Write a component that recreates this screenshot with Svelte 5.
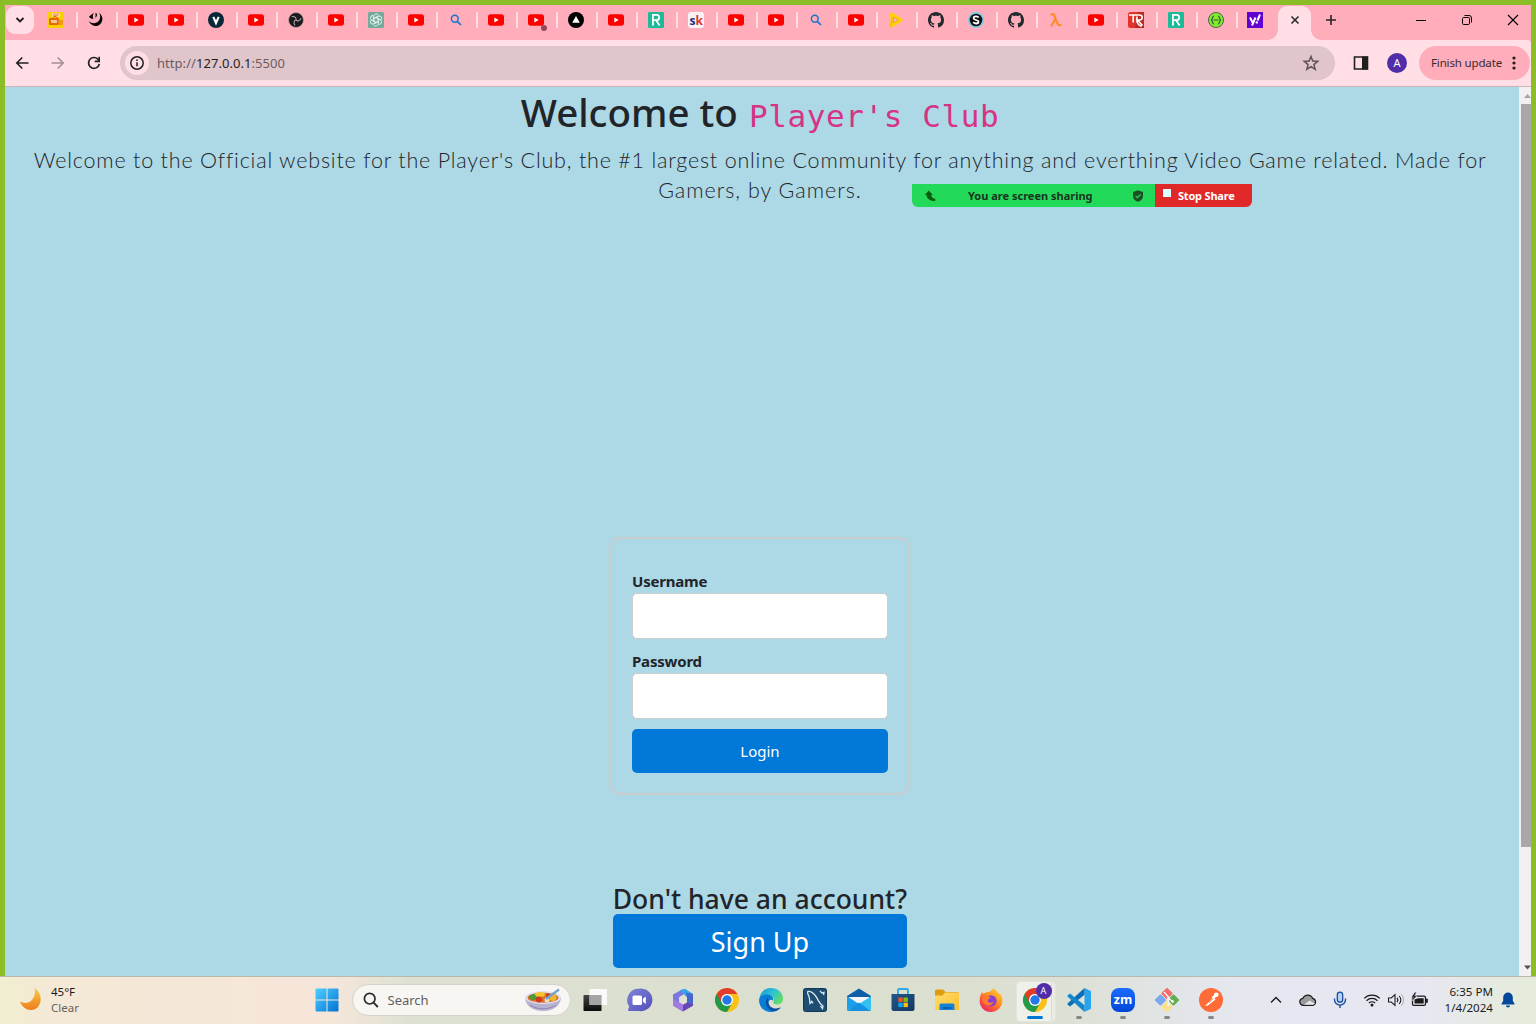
<script>
  const tabs = [
    'shop', 'swirl', 'yt', 'yt', 'v', 'yt', 'obs', 'yt', 'gpt', 'yt', 'search', 'yt', 'ytdot', 'tri', 'yt', 'r',
    'sk', 'yt', 'yt', 'search', 'yt', 'play', 'gh', 's', 'gh', 'lambda', 'yt', 'tr', 'r', 'swagger', 'yahoo'
  ];
  const apps = [
    { id: 'taskview' }, { id: 'chat' }, { id: 'm365' }, { id: 'chrome' }, { id: 'edge' }, { id: 'mysql' },
    { id: 'mail' }, { id: 'store' }, { id: 'files' }, { id: 'firefox' }, { id: 'chrome', active: true },
    { id: 'vscode', open: true }, { id: 'zoom', open: true }, { id: 'git', open: true }, { id: 'postman', open: true }
  ];
</script>

{#snippet favicon(kind)}
  <svg class="fav" viewBox="0 0 16 16">
    {#if kind === 'yt' || kind === 'ytdot'}
      <rect x="0" y="2.2" width="16" height="11.6" rx="2.8" fill="#f00" />
      <path d="M6.3 5.5v5l4.4-2.5z" fill="#fff" />
    {:else if kind === 'shop'}
      <rect width="16" height="16" fill="#f9cf00" />
      <rect x="4" y="1" width="8" height="4" rx="1" fill="#f6e3a0" />
      <path d="M5 2.2h6M5 3.8h5" stroke="#e86a4a" stroke-width=".8" />
      <rect x="1" y="6" width="10" height="7" rx="1" fill="#e8650c" />
      <rect x="3" y="8" width="6" height="3" fill="#f8c890" />
      <rect x="10.500" y="8" width="4.500" height="5" fill="#f09a1a" />
      <path d="M5 6l1-1.500h2L9 6" stroke="#e8650c" fill="none" />
    {:else if kind === 'swirl'}
      <path d="M1 4.500 6 .8C4.300 3.300 4.500 5.500 5.500 6.500 3.800 7.200 2 6.500 1 4.500z" fill="#000" />
      <path d="M7 1.200C8 2 7.600 4 7.200 5.800 8.800 5 9.300 3.500 8.800 1.500z" fill="#000" />
      <path d="M11 .8c2 3.300 1.500 7-1.300 9.200-2.500 1.800-6.200 1.500-9-.8C3 13.200 6.800 15 10.200 13.500 15.300 11.200 16 4.300 11 .8z" fill="#000" />
    {:else if kind === 'v'}
      <circle cx="8" cy="8" r="8" fill="#08283a" />
      <path d="M5.300 4.800 8 11l2.700-6.200" stroke="#fff" stroke-width="2.100" fill="none" />
    {:else if kind === 'obs'}
      <circle cx="8" cy="8" r="7.500" fill="#1b1a1c" stroke="#c9a2a9" stroke-width=".8" />
      <g fill="none" stroke="#aaa5a7" stroke-width="1.100">
        {#each [0, 120, 240] as a}
          <path transform="rotate({a} 8 8)" d="M8 8C8.500 6 7 4 3.800 4.600" />
        {/each}
      </g>
    {:else if kind === 'gpt'}
      <rect width="16" height="16" rx="1.500" fill="#75a99b" />
      <g fill="none" stroke="#e8f2ef" stroke-width=".9">
        {#each [0, 60, 120, 180, 240, 300] as a}
          <path transform="rotate({a} 8 8)" d="M5.800 9.200V4.300a2.500 2.500 0 0 1 4.600-1.200M5.800 6.700 10 4.300" />
        {/each}
      </g>
    {:else if kind === 'search'}
      <circle cx="6.800" cy="6.700" r="3.400" fill="none" stroke="#1a73c9" stroke-width="1.500" />
      <path d="m9.300 9.300 3.700 3.700" stroke="#1a73c9" stroke-width="1.700" />
    {:else if kind === 'tri'}
      <circle cx="8" cy="8" r="8" fill="#000" />
      <path d="M8 4 11.800 10.800H4.200z" fill="#fff" />
    {:else if kind === 'r'}
      <rect width="16" height="16" rx="1.200" fill="#1dba9a" />
      <path d="M4.900 13.500V2.800h3.800c3.300 0 3.300 5.400 0 5.400H4.900M8 8.200l3.600 5.300" stroke="#fff" stroke-width="1.800" fill="none" />
    {:else if kind === 'sk'}
      <rect width="16" height="16" rx="3" fill="#f7f2f5" />
      <text x="1.600" y="12.500" class="g" fill="#252f85">s</text>
      <text x="7.400" y="12.500" class="g" fill="#e0342c">k</text>
    {:else if kind === 'play'}
      <path d="M1.500 1.500 5 .8 15 7.500 13 10 4 15.500 2 14.500l.5-8z" fill="#ffcf0a" />
      <path d="M5.500 5v6l5-3.200z" fill="#ffb0bc" stroke="#e9a800" stroke-width=".8" />
      <path d="M2.500 14 4.500 5.500" stroke="#f1b400" />
    {:else if kind === 'gh'}
      <path fill="#24292f" d="M8 0C3.580 0 0 3.580 0 8c0 3.540 2.290 6.530 5.470 7.590.4.070.55-.17.55-.38 0-.19-.01-.82-.01-1.490-2.010.37-2.530-.49-2.690-.94-.09-.23-.48-.94-.82-1.130-.28-.15-.68-.52-.01-.53.63-.01 1.080.58 1.230.82.72 1.210 1.870.87 2.330.66.07-.52.28-.87.51-1.070-1.780-.2-3.640-.89-3.640-3.950 0-.87.31-1.590.82-2.150-.08-.2-.36-1.020.08-2.120 0 0 .67-.21 2.200.82.64-.18 1.320-.27 2-.27s1.360.09 2 .27c1.530-1.040 2.200-.82 2.200-.82.44 1.100.16 1.920.08 2.120.51.56.82 1.270.82 2.150 0 3.070-1.870 3.750-3.650 3.950.29.25.54.73.54 1.480 0 1.070-.01 1.930-.01 2.200 0 .21.15.46.55.38A8.010 8.010 0 0 0 16 8c0-4.420-3.580-8-8-8z" />
    {:else if kind === 's'}
      <circle cx="8" cy="8" r="8" fill="#7fc9e8" />
      <circle cx="8" cy="8" r="6.300" fill="#111" />
      <path d="M10.600 5.600C9.800 4 5.600 4 5.600 6.200c0 2.300 4.900 1.300 4.900 3.600 0 2.200-4.300 2.200-5.200.4" stroke="#fff" stroke-width="1.800" fill="none" />
    {:else if kind === 'lambda'}
      <path d="M2.500 2.300h3.300c1.500 3.800 2.700 8 4.500 10.300.8 1 1.800.8 3.200.2M7.500 7 3 14.300" stroke="#ff8b2e" stroke-width="2.200" fill="none" />
    {:else if kind === 'tr'}
      <rect width="16" height="16" rx="2.500" fill="#e0352b" />
      <path d="M10 0h6v16H7z" fill="#b92a22" />
      <path d="M1 3h10.500c3.500 0 3.500 5 0 5H9.500l5 5.500M5.200 3v7.500M9.300 4.500C8 8 8.500 12.500 13.500 14.500" stroke="#fff" stroke-width="1.600" fill="none" />
    {:else if kind === 'swagger'}
      <circle cx="8" cy="8" r="7.500" fill="#85ea2d" stroke="#3b6a4e" stroke-width="1" />
      <path d="M6 4c-2 0-1 3-2.500 4C5 9 4 12 6 12M10 4c2 0 1 3 2.500 4C11 9 12 12 10 12M5.500 8h5" stroke="#2c5a36" stroke-width="1.200" fill="none" />
    {:else if kind === 'yahoo'}
      <rect width="16" height="16" fill="#6001d2" />
      <path d="m3 5.500 2.600 5M8.500 5.500 5 13.500" stroke="#fff" stroke-width="1.900" fill="none" />
      <path d="m13 2.500-2.500 6" stroke="#fff" stroke-width="2" />
      <circle cx="9.800" cy="10.400" r="1.200" fill="#fff" />
    {/if}
  </svg>
{/snippet}

{#snippet app(id)}
  <svg class="app-icon" viewBox="0 0 24 24">
    {#if id === 'taskview'}
      <rect x=".5" y="7" width="18" height="16" rx=".8" fill="url(#dark)" />
      <rect x="6.500" y="1" width="17.500" height="16" rx=".8" fill="#fff" opacity=".85" />
      <rect x="6.500" y="7" width="12" height="10" fill="#a5a5a5" />
    {:else if id === 'chat'}
      <path d="M12 .8A11.300 11.300 0 1 1 12 23H1.800c-.7 0-1-.6-.7-1.200l1.200-3.200A11.300 11.300 0 0 1 12 .8z" fill="url(#violet)" />
      <rect x="5.500" y="7.500" width="9.500" height="9.500" rx="1.600" fill="#fff" />
      <path d="m16 10.800 2.800-2.300v7.500L16 13.800z" fill="#fff" />
    {:else if id === 'm365'}
      <path d="M12 1 2 6.500v11l6-3V9.300l6.500-4.300z" fill="#7a78e0" />
      <path d="M9 2.500 14 .8l8 5.200v6l-6-2.700z" fill="#35a4ea" />
      <path d="m15 4.500 7 1.500v12l-6-3.300V9.300z" fill="#4668cc" />
      <path d="M22 16.500v1.300L12 23.500l-10-6 6-3 4 2.200 4-2.300z" fill="#6845b4" />
      <path d="M2 11v6.500l10 6v-6.700l-4-2.300z" fill="#a07be0" />
      <path d="m12 8 3.500 2v4L12 16l-3.500-2v-4z" fill="#dfe1d6" />
    {:else if id === 'chrome'}
      <circle cx="12" cy="12" r="12" fill="#fbc116" />
      <path d="M1.600 6A12 12 0 0 0 12 24l5.200-9L12 12z" fill="#229a48" />
      <path d="M1.600 6A12 12 0 0 1 22.400 6H12A6 6 0 0 0 6.500 14.500z" fill="#e33b2e" />
      <circle cx="12" cy="12" r="6" fill="#fff" />
      <circle cx="12" cy="12" r="4.700" fill="#2477e8" />
    {:else if id === 'edge'}
      <path d="M.4 10.500C1.200 4 6 0 12 0c7 0 12 5 12 10.500 0 4-3 6-6 6-2.500 0-4.300-.9-3.500-2.400 1.900-3.600-1.500-6-4.500-6C5 8.100.4 11 .4 10.500z" fill="url(#edgeTop)" />
      <path d="M0 12C.5 8.500 4.500 6 8.500 6.500c4 .4 6.500 3.500 5.700 6.500C12 10 8.500 13 9 16.500c.6 4 5.500 6.500 12.500 2.700C19 22.500 15.500 24 12 24 5 24 0 19 0 12z" fill="#087bd4" />
      <path d="M9 9.500C5.500 12 6.500 20 12.500 22.500c4 1.500 7-.3 9.200-3C17 22 9.500 20 9.500 14z" fill="#0c4fa0" />
    {:else if id === 'mysql'}
      <rect x=".5" y=".5" width="23" height="23" rx="2" fill="#1d4d73" stroke="#123754" />
      <path d="M4.500 3.500c3-.5 6 1.500 8.500 5s2.500 6.500 7 9.500l-.5 2.500-2-2.500M4.500 3.500c0 3.500 2 4.500 2 7.500l.5 4.500 1.800-2.200 1.200 2M17 3l2 2 2-.5-.5 2.500" stroke="#d9e6ee" stroke-width="1.300" fill="none" />
    {:else if id === 'mail'}
      <path d="M0 8 12 .5 24 8v4H0z" fill="#0f5fa8" />
      <path d="M2 9h20v7H2z" fill="#f4f6f8" />
      <path d="M0 8.300 12 16 0 22.500z" fill="#1aa0ea" />
      <path d="M24 8.300 12 16l12 6.500z" fill="#35c0f4" />
      <path d="M0 23 12 14.500 24 23z" fill="#1492e0" />
    {:else if id === 'store'}
      <path d="M7 6V2.200C7 1.500 7.500 1 8.200 1h7.600c.7 0 1.200.5 1.200 1.200V6" stroke="#2ea8e6" stroke-width="1.800" fill="none" />
      <path d="M.5 6h23v15a2 2 0 0 1-2 2h-19a2 2 0 0 1-2-2z" fill="url(#navy)" />
      <rect x="7.300" y="9.500" width="4.400" height="4.400" fill="#f35325" /><rect x="12.500" y="9.500" width="4.400" height="4.400" fill="#81bc06" />
      <rect x="7.300" y="14.700" width="4.400" height="4.400" fill="#05a6f0" /><rect x="12.500" y="14.700" width="4.400" height="4.400" fill="#ffba08" />
    {:else if id === 'files'}
      <path d="M0 3a1.500 1.500 0 0 1 1.500-1.500H8L10.500 4H22a2 2 0 0 1 2 2v5H0z" fill="#dd9c10" />
      <path d="M0 7.500h7.500L10 4.500h14V22H0z" fill="url(#folder)" />
      <path d="M4.500 22v-5a1.500 1.500 0 0 1 1.500-1.500h12a1.500 1.500 0 0 1 1.500 1.500v5z" fill="#1681d8" />
      <rect x="7.500" y="19" width="9" height="2" rx="1" fill="#0c5fae" />
    {:else if id === 'firefox'}
      <path d="M3 4 4.500 6C6 4.500 8 4 10 4l5-3.800C16.500 3 19.500 3.500 20 6l1-.8C23.800 9 24.200 13 22.500 17a11.500 11.500 0 0 1-21.300-.5C-.2 11 1.500 7 3 4z" fill="url(#fire)" />
      <circle cx="12" cy="12.800" r="5.600" fill="#8a3fd0" />
      <path d="M3.500 9.500c3.500-2.500 6.500-1.500 8-.2-.5 1.800-2.500 1.700-2.800 2.700-.3 3 3.300 3.700 6 1.500-1 3.500-4.500 5-7.500 3.500s-4.500-4-3.700-7.500z" fill="#ff7c2a" />
    {:else if id === 'vscode'}
      <path d="M17.500 0 24 3.200v17.600L17.500 24z" fill="#26a5ed" />
      <path d="M17.500 0v6.700L3 18.500l-2.500-2v-1z" fill="#0a6fb8" />
      <path d="M17.500 24v-6.700L3 5.500l-2.500 2v1z" fill="#1386cf" />
    {:else if id === 'zoom'}
      <rect width="24" height="24" rx="8" fill="url(#zoomBlue)" />
      <text x="12" y="16" class="zm" text-anchor="middle">zm</text>
    {:else if id === 'git'}
      <g transform="translate(12 12) rotate(45) scale(.98) translate(-12 -12)">
        <rect x="3" y="3" width="8.600" height="8.600" rx="1" fill="#f26d6d" />
        <rect x="12.400" y="3" width="8.600" height="8.600" rx="1" fill="#63ad54" />
        <rect x="3" y="12.400" width="8.600" height="8.600" rx="1" fill="#7aa8ee" />
        <rect x="12.400" y="12.400" width="8.600" height="8.600" rx="1" fill="#fbe08a" />
      </g>
      <path d="m9 4 4.500 5v8M13.500 10l4 3.500" stroke="#f2f2ee" stroke-width="1.400" fill="none" />
      <circle cx="13.500" cy="10" r="1.500" fill="#f2f2ee" /><circle cx="13.500" cy="17" r="1.400" fill="#f2f2ee" /><circle cx="17.500" cy="13.500" r="1.400" fill="#f2f2ee" />
    {:else if id === 'postman'}
      <circle cx="12" cy="12" r="12" fill="#ff6c37" />
      <path d="m6 18 8.500-8.500 2 2L9 17.500z" fill="#fff" />
      <path d="m13.500 10.500 3-3" stroke="#fff" stroke-width="2.600" />
      <circle cx="17.300" cy="6.700" r="2.300" fill="#fff" />
      <path d="M5 18.500h4M10 15l4.500-4.500" stroke="#ff6c37" stroke-width=".7" />
    {/if}
  </svg>
{/snippet}

<svg class="defs" width="0" height="0">
  <defs>
    <linearGradient id="dark" x2="0" y2="1"><stop stop-color="#444" /><stop offset="1" stop-color="#0b0b0b" /></linearGradient>
    <linearGradient id="violet" x2="1" y2="1"><stop stop-color="#7f82dc" /><stop offset="1" stop-color="#5350b4" /></linearGradient>
    <linearGradient id="edgeTop" x2="1" y2=".6"><stop stop-color="#1594d8" /><stop offset=".55" stop-color="#2fc3d3" /><stop offset="1" stop-color="#62dc66" /></linearGradient>
    <linearGradient id="navy" x2="1" y2="1"><stop stop-color="#20598c" /><stop offset="1" stop-color="#16365f" /></linearGradient>
    <linearGradient id="folder" x2="1" y2="1"><stop stop-color="#ffdc70" /><stop offset="1" stop-color="#fcc02c" /></linearGradient>
    <linearGradient id="fire" x1="1" x2=".2" y2="1"><stop stop-color="#ffe13c" /><stop offset=".5" stop-color="#ff8a1f" /><stop offset="1" stop-color="#ee1e62" /></linearGradient>
    <linearGradient id="zoomBlue" x2="0" y2="1"><stop stop-color="#1a6dff" /><stop offset="1" stop-color="#0045d8" /></linearGradient>
    <linearGradient id="win" x2="1" y2="1"><stop stop-color="#4fd0ff" /><stop offset="1" stop-color="#0272d2" /></linearGradient>
    <linearGradient id="moonFill" x2="0" y2="1"><stop stop-color="#f8cb45" /><stop offset="1" stop-color="#ee7d1c" /></linearGradient>
  </defs>
</svg>

<div class="screen">
  <div class="browser">
    <div class="tabstrip">
      <div class="tabsearch"><svg width="10" height="8" viewBox="0 0 10 8"><path d="m1.500 2 3.500 3.500L8.500 2" stroke="#1f1f1f" stroke-width="1.900" fill="none" /></svg></div>
      <div class="tabs">
        {#each tabs as t}
          <div class="tab">{@render favicon(t)}{#if t === 'ytdot'}<i class="dot"></i>{/if}</div>
        {/each}
      </div>
      <div class="active-tab"><svg width="10" height="10" viewBox="0 0 10 10"><path d="m1.500 1.500 7 7m0-7-7 7" stroke="#2b2b2b" stroke-width="1.600" /></svg></div>
      <svg class="plus" width="12" height="12" viewBox="0 0 12 12"><path d="M6 1v10M1 6h10" stroke="#2b2326" stroke-width="1.600" /></svg>
      <div class="winbtns">
        <svg width="12" height="12" viewBox="0 0 12 12"><path d="M1 6.500h10" stroke="#000" /></svg>
        <svg width="12" height="12" viewBox="0 0 12 12"><rect x="1.500" y="3.500" width="7" height="7" rx="1.200" fill="none" stroke="#000" /><path d="M3.500 1.500H8A2.500 2.500 0 0 1 10.500 4v4.500" fill="none" stroke="#000" /></svg>
        <svg width="12" height="12" viewBox="0 0 12 12"><path d="m1 1 10 10M11 1 1 11" stroke="#000" stroke-width="1.100" /></svg>
      </div>
    </div>

    <div class="toolbar">
      <div class="nav">
        <svg width="14" height="14" viewBox="0 0 14 14"><path d="M13.500 7H2M7.300 1.500 1.800 7l5.500 5.500" stroke="#1f1f1f" stroke-width="1.600" fill="none" /></svg>
        <svg width="14" height="14" viewBox="0 0 14 14"><path d="M.5 7H12M6.700 1.500 12.200 7l-5.500 5.500" stroke="#a38d93" stroke-width="1.600" fill="none" /></svg>
        <svg width="14" height="14" viewBox="0 0 14 14"><path d="M12.300 7.800A5.400 5.400 0 1 1 10.900 3.200L12.500 5" stroke="#1f1f1f" stroke-width="1.700" fill="none" /><path d="M13 .8v5.400H7.700v-1.600h3.700V.8z" fill="#1f1f1f" /></svg>
      </div>
      <div class="address">
        <div class="info"><svg width="14" height="14" viewBox="0 0 14 14"><circle cx="7" cy="7" r="6.200" fill="none" stroke="#1f1f1f" stroke-width="1.500" /><path d="M7 6.200v4M7 3.500v1.500" stroke="#1f1f1f" stroke-width="1.500" /></svg></div>
        <span class="url">http://<b>127.0.0.1</b>:5500</span>
        <svg class="star" width="16" height="16" viewBox="0 0 16 16"><path d="m8 1.500 1.800 4.600 4.900.3-3.800 3.200 1.300 4.800L8 11.700l-4.200 2.700 1.300-4.800L1.300 6.400l4.900-.3z" stroke="#5d5356" stroke-width="1.500" fill="none" /></svg>
      </div>
      <svg class="panel" width="16" height="16" viewBox="0 0 16 16"><path d="M1.500 2h13v12h-13z" fill="none" stroke="#1f1f1f" stroke-width="1.600" /><path d="M9 1.500h6v13H9z" fill="#1f1f1f" /></svg>
      <div class="avatar">A</div>
      <div class="update"><span>Finish update</span><svg width="4" height="14" viewBox="0 0 4 14"><circle cx="2" cy="2" r="1.600" /><circle cx="2" cy="7" r="1.600" /><circle cx="2" cy="12" r="1.600" /></svg></div>
    </div>

    <div class="viewport">
      <main class="page">
        <h1><span>Welcome to</span> <code>Player's Club</code></h1>
        <p class="intro">Welcome to the Official website for the Player's Club, the #1 largest online Community for anything and everthing Video Game related. Made for<br /><span class="tail">Gamers, by Gamers.</span></p>
        <form class="login">
          <label for="user">Username</label>
          <input id="user" type="text" />
          <label for="pass">Password</label>
          <input id="pass" type="password" />
          <button type="button">Login</button>
        </form>
        <section class="signup">
          <h3>Don't have an account?</h3>
          <button type="button">Sign Up</button>
        </section>
      </main>
      <div class="scrollbar">
        <svg width="12" height="17" viewBox="0 0 12 17"><path d="m5 11 3.500-4 3.500 4z" fill="#a3a3a3" /></svg>
        <div class="thumb"></div>
        <svg class="down" width="12" height="17" viewBox="0 0 12 17"><path d="m5 6.500 3.500 4 3.500-4z" fill="#505050" /></svg>
      </div>
    </div>
  </div>

  <div class="sharing">
    <div class="green">
      <svg width="12" height="12" viewBox="0 0 12 12"><path d="M.8 5 4.700.6 8.800 5H7.300c0 2.200 1.500 3.500 3.900 3.800V11C6.500 11 2.700 9 2.500 5z" fill="#0b5d0e" /></svg>
      <span>You are screen sharing</span>
      <svg width="12" height="12" viewBox="0 0 12 12"><path d="M6 .3 11 2v4c0 3-2.300 4.800-5 5.800C3.300 10.800 1 9 1 6V2z" fill="#1c4f22" /><path d="m3.600 5.800 1.800 1.800 3.200-3.200" stroke="#23d959" stroke-width="1.200" fill="none" /></svg>
    </div>
    <div class="red"><i></i><span>Stop Share</span></div>
  </div>

  <footer class="taskbar">
    <div class="weather">
      <svg width="24" height="24" viewBox="0 0 24 24"><path d="M15.500 1C26 8.500 22 22.500 12.500 23 7.500 23.200 3 20 1 14.500c4.500 2.500 9.500 1.500 12.300-2C16 9 16.500 5 15.500 1z" fill="url(#moonFill)" /></svg>
      <div><div class="temp">45°F</div><div class="cond">Clear</div></div>
    </div>
    <div class="center">
      <div class="cell"><svg width="24" height="24" viewBox="0 0 24 24"><path d="M.5 1.500A1 1 0 0 1 1.500.5h10v11H.5zM12.500.5h10a1 1 0 0 1 1 1v10h-11zM.5 12.500h11v11h-10a1 1 0 0 1-1-1zM12.500 12.500h11v10a1 1 0 0 1-1 1h-10z" fill="url(#win)" /></svg></div>
      <div class="searchbox">
        <svg width="16" height="16" viewBox="0 0 16 16"><circle cx="6.700" cy="6.700" r="5.300" fill="none" stroke="#2b2b2b" stroke-width="1.700" /><path d="m10.600 10.600 4.200 4.400" stroke="#2b2b2b" stroke-width="1.900" /></svg>
        <span>Search</span>
        <svg class="bowl" width="38" height="24" viewBox="0 0 38 24">
          <path d="M1 9c0 8 7 14 18 14s18-6 18-14z" fill="#b7b3cf" />
          <ellipse cx="19" cy="9.500" rx="18" ry="6.500" fill="#e2e0ee" />
          <ellipse cx="19" cy="9.800" rx="15.500" ry="5" fill="#d8702e" />
          <ellipse cx="10" cy="9" rx="5" ry="3" fill="#4d9a35" /><ellipse cx="16" cy="6.500" rx="5" ry="2.500" fill="#f6c52c" />
          <circle cx="15" cy="11.500" r="3" fill="#d8351e" /><circle cx="23" cy="12" r="2.500" fill="#e9e3c4" /><circle cx="29" cy="9.500" r="3.500" fill="#f0b529" /><circle cx="24" cy="7.500" r="2" fill="#c53c1d" />
          <path d="M22 11 35 1.500" stroke="#6fa3d6" stroke-width="2.200" />
          <path d="M6 17c7 5 19 5 26 0" stroke="#8d88b3" fill="none" />
        </svg>
      </div>
      {#each apps as a}
        <div class="cell" class:active={a.active} class:open={a.open}>
          {@render app(a.id)}
          {#if a.active}<span class="badge">A</span>{/if}
        </div>
      {/each}
    </div>
    <div class="tray">
      <svg width="12" height="12" viewBox="0 0 12 12"><path d="m1 8.500 5-5 5 5" stroke="#1b1b1b" stroke-width="1.400" fill="none" /></svg>
      <svg width="18" height="14" viewBox="0 0 18 14"><path d="M4.500 12.300a3.500 3.500 0 0 1-.5-7 5.200 5.200 0 0 1 9.600 0 3.600 3.600 0 0 1 .4 7z" fill="#9b9b9b" stroke="#1b1b1b" stroke-width="1.200" /><path d="M5 11.700 10.500 7.500l5.500 3.300-2 1z" fill="#e4e4e4" /></svg>
      <svg width="14" height="18" viewBox="0 0 14 18"><rect x="4.300" y="1.200" width="5.400" height="10" rx="2.700" fill="#b9d0f0" stroke="#174ea6" stroke-width="1.300" /><path d="M1.500 7.500v1.200a5.500 5.500 0 0 0 11 0V7.500M7 14.200V17" stroke="#174ea6" stroke-width="1.400" fill="none" /></svg>
      <svg width="18" height="14" viewBox="0 0 18 14"><path d="M1.200 5.300a11 11 0 0 1 15.600 0M3.500 7.700a7.800 7.800 0 0 1 11 0M5.900 10a4.500 4.500 0 0 1 6.200 0" stroke="#1b1b1b" stroke-width="1.200" fill="none" /><circle cx="9" cy="12" r="1.500" fill="#1b1b1b" /></svg>
      <svg width="18" height="14" viewBox="0 0 18 14"><path d="M1.500 5h2.700L8 1.700v10.600L4.200 9H1.500z" stroke="#1b1b1b" stroke-width="1.100" fill="none" /><path d="M10 4.800c1 1.300 1 3.100 0 4.400M12.200 3c2 2.400 2 5.600 0 8" stroke="#1b1b1b" stroke-width="1.100" fill="none" /><path d="M14.300 1.200c3 3.400 3 8.200 0 11.600" stroke="#a9a9b3" fill="none" /></svg>
      <svg width="18" height="14" viewBox="0 0 18 14"><rect x="1.500" y="3.200" width="13" height="9.200" rx="1.500" fill="none" stroke="#1b1b1b" stroke-width="1.300" /><path d="M3.500 6.500 7 5.300h5.700v5.200H3.500zM15 5.800h1.800v4H15z" fill="#1b1b1b" /><path d="M3.800-.8.300 4.300h2L1 8.200l5-5.200H3.700L5.500-.8z" fill="#1b1b1b" stroke="#e7e7f2" stroke-width=".5" /></svg>
      <div class="clock"><div class="time">6:35 PM</div><div class="date">1/4/2024</div></div>
      <svg class="bell" width="14" height="16" viewBox="0 0 14 16"><path d="M7 .5a4.800 4.800 0 0 1 4.800 4.800v3.500l1.700 3v.7H.5v-.7l1.700-3V5.300A4.800 4.800 0 0 1 7 .5zM5 13.500h4a2 2 0 0 1-4 0z" fill="#04489c" /></svg>
    </div>
  </footer>
</div>

<style>
  :global(body) { margin: 0; overflow: hidden; }
  * { box-sizing: border-box; }
  .defs { position: absolute; }
  svg { display: block; flex: none; overflow: visible; }
  .screen { width: 1536px; height: 1024px; display: flex; flex-direction: column; position: relative; font-family: 'Noto Sans', 'Open Sans', sans-serif; color: #212529; }
  .browser { height: 976px; border: 5px solid #8bbe26; border-bottom: 0; display: flex; flex-direction: column; background: #ffadbb; }

  .tabstrip { height: 35px; display: flex; align-items: flex-start; background: #ffadbb; }
  .tabsearch { width: 28px; height: 28px; margin: 1px 0 0 1px; border-radius: 9px; background: #ffdfe5; display: flex; align-items: center; justify-content: center; }
  .tabs { width: 1240px; margin-left: 4px; height: 30px; display: grid; grid-template-columns: repeat(31, 40px); }
  .tab { position: relative; display: flex; justify-content: center; align-items: center; border-right: 2px solid #ffdfe5; height: 16px; margin-top: 7px; padding-right: 2px; }
  .tab:last-child { border-right-color: transparent; padding-right: 4px; }
  .fav { width: 16px; height: 16px; }
  .dot { position: absolute; width: 6px; height: 6px; border-radius: 50%; background: #94475a; left: 23px; top: 13px; }
  .g { font: 700 12px 'Open Sans', sans-serif; }
  .active-tab { width: 33px; height: 34px; margin-top: 1px; border-radius: 9px 9px 0 0; background: #ffdfe5; position: relative; display: flex; justify-content: center; padding-top: 9px; }
  .active-tab::before, .active-tab::after { content: ''; position: absolute; bottom: 0; width: 10px; height: 10px; }
  .active-tab::before { right: 100%; background: radial-gradient(circle at 0 0, transparent 9.500px, #ffdfe5 10px); }
  .active-tab::after { left: 100%; background: radial-gradient(circle at 100% 0, transparent 9.500px, #ffdfe5 10px); }
  .plus { margin: 9px 0 0 14px; }
  .winbtns { margin: 9px 12px 0 auto; display: flex; gap: 34px; }

  .toolbar { height: 47px; background: #ffdfe5; border-bottom: 1px solid #d0b4bb; display: flex; align-items: center; border-top-right-radius: 4px; }
  .nav { display: flex; gap: 22px; margin-left: 10px; }
  .address { margin-left: 19px; width: 1215px; height: 34px; border-radius: 17px; background: #e0c5ca; display: flex; align-items: center; padding: 0 16px 0 5px; }
  .info { width: 24px; height: 24px; border-radius: 50%; background: #ffdfe5; display: flex; align-items: center; justify-content: center; }
  .url { margin-left: 8px; font-size: 13px; color: #6b5d61; letter-spacing: .05px; }
  .url b { font-weight: 400; color: #1f1f1f; }
  .star { margin-left: auto; }
  .panel { margin-left: 18px; }
  .avatar { margin-left: 18px; width: 20px; height: 20px; border-radius: 50%; background: #512da8; color: #fff; font-size: 11px; line-height: 20px; text-align: center; }
  .update { margin-left: 12px; width: 111px; height: 34px; border-radius: 17px; background: #ffadbb; display: flex; align-items: center; font-size: 11.500px; letter-spacing: -.15px; color: #3b2a2e; padding-left: 12px; white-space: nowrap; }
  .update span { padding-bottom: 1px; }
  .update svg { margin-left: auto; margin-right: 14px; fill: #1f1f1f; }

  .viewport { flex: 1; display: flex; min-height: 0; background: #add8e6; }
  .page { flex: 1; display: flex; flex-direction: column; align-items: center; padding-right: 4px; }
  h1, h3, p { margin: 0; }
  h1 { height: 50px; margin-top: 1px; line-height: 48px; font-size: 38.500px; font-weight: 500; white-space: pre; display: flex; align-items: baseline; gap: 11px; }
  code { font: 400 31px 'DejaVu Sans Mono', monospace; color: #d63384; letter-spacing: .6px; }
  .intro { margin-top: 7px; height: 60px; line-height: 30px; font-family: Lato, sans-serif; font-weight: 300; font-size: 21.500px; letter-spacing: .800px; text-align: center; white-space: nowrap; }
  .tail { letter-spacing: 1px; }
  .login { width: 300px; height: 258px; margin-top: 332px; border: 2px solid #ccc; border-radius: 10px; padding: 32px 20px 20px; display: flex; flex-direction: column; }
  .login label { height: 22px; line-height: 21px; font-weight: 700; font-size: 15px; letter-spacing: -.2px; }
  .login input { width: 256px; height: 46px; border: 1px solid #ccc; border-radius: 5px; background: #fff; margin: 0 0 12px; padding: 0 10px; }
  .login #pass { margin-bottom: 10px; }
  button { border: 0; background: #0078d7; color: #fff; font-family: inherit; border-radius: 5px; padding: 0; }
  .login button { height: 44px; font-size: 15px; }
  .signup { width: 294.500px; margin-top: 87px; display: flex; flex-direction: column; }
  .signup h3 { height: 32px; line-height: 35px; font-size: 26.500px; font-weight: 500; white-space: nowrap; }
  .signup button { height: 54px; font-size: 27px; }
  .scrollbar { width: 12px; background: #f1f1f1; display: flex; flex-direction: column; overflow: hidden; }
  .thumb { height: 743px; margin-left: 2px; background: #a8a8a8; }
  .down { margin-top: auto; }

  .sharing { position: absolute; left: 912px; top: 184px; width: 340px; height: 23px; display: flex; border-radius: 0 0 6px 6px; overflow: hidden; font-size: 11px; font-weight: 700; white-space: nowrap; }
  .green { width: 243px; background: #23d959; color: #173420; display: flex; align-items: center; padding: 0 11px 0 12px; }
  .green span { margin: 0 auto 0 32px; }
  .red { flex: 1; background: #e02828; color: #fff; display: flex; align-items: center; padding-left: 8px; letter-spacing: -.2px; }
  .red span { padding-bottom: 1px; }
  .red i { width: 8px; height: 8px; background: #dcffff; margin: -5px 7px 0 0; }

  .taskbar { height: 48px; border-top: 1px solid #bab8ac; display: flex; position: relative; background: linear-gradient(90deg, #f1eed0 0, #f4e8d6 60px, #f6e6da 330px, #dde1d2 410px, #dadfcf 800px, #dbe0d2 1050px, #e5e7ef 1230px, #e7e7f2 1420px, #e5ecd9 1536px); }
  .weather { width: 304.500px; display: flex; padding: 11px 0 0 19px; gap: 8px; font-size: 11.500px; line-height: 16px; }
  .weather > svg { margin-top: -1px; }
  .weather > div { margin-top: -4px; }
  .temp { color: #1b1b1b; }
  .cond { color: #66625c; }
  .center { display: flex; align-items: center; height: 46px; }
  .cell { width: 44px; height: 46px; display: flex; align-items: center; justify-content: center; position: relative; }
  .app-icon { width: 24px; height: 24px; }
  .searchbox { width: 219px; height: 32px; border-radius: 16px; background: #f7f6f3; border: 1px solid #d5d2ca; display: flex; align-items: center; padding: 0 8px 0 10px; margin: 0 2px 0 3px; font-size: 13px; color: #5f5f5f; }
  .searchbox span { margin-left: 9px; }
  .bowl { margin-left: auto; }
  .open::after, .active::after { content: ''; position: absolute; bottom: 4px; height: 3px; width: 6px; border-radius: 2px; background: #858783; }
  .active::after { width: 16px; background: #0078d4; }
  .active::before { content: ''; position: absolute; left: 3px; top: 4px; width: 38px; height: 39px; border-radius: 4px; background: linear-gradient(90deg, #eef0ea 34px, #d9dcd2 34px 35px, #eaece4 35px); border: 1px solid #e3e5dd; }
  .active .app-icon { position: relative; }
  .badge { position: absolute; left: 23px; top: 6px; width: 16px; height: 16px; border-radius: 50%; background: #512da8; color: #fff; font-size: 9px; line-height: 16px; text-align: center; }
  .tray { margin-left: auto; padding-right: 21px; display: flex; align-items: center; height: 46px; }
  .tray > svg:nth-child(2) { margin-left: 17px; }
  .tray > svg:nth-child(3) { margin-left: 16px; }
  .tray > svg:nth-child(4) { margin-left: 16px; }
  .tray > svg:nth-child(5) { margin-left: 6px; }
  .tray > svg:nth-child(6) { margin-left: 6px; }
  .clock { width: 64px; text-align: right; font-size: 11.600px; line-height: 16px; color: #1b1b1b; }
  .tray .bell { margin-left: 8px; }
  .zm { font: 700 12.500px 'Open Sans', sans-serif; fill: #fff; }
</style>
